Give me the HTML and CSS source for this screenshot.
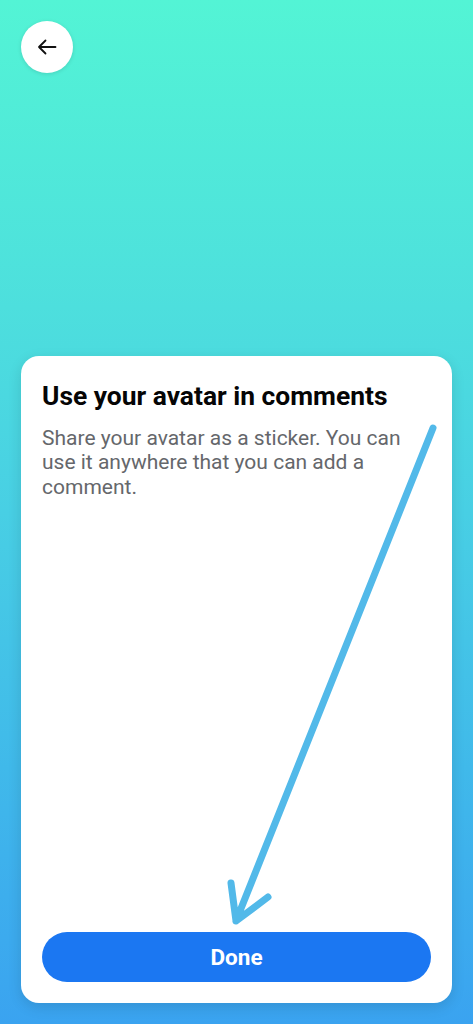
FILE: index.html
```html
<!DOCTYPE html>
<html>
<head>
<meta charset="utf-8">
<link rel="stylesheet" href="styles.css">
</head>
<body>
<div class="screen">
  <div class="back">
    <svg width="24" height="24" viewBox="0 0 24 24"><path d="M20.5 12H4 M10.5 5.5L4 12l6.5 6.5" fill="none" stroke="#111" stroke-width="1.8" stroke-linecap="round" stroke-linejoin="round"/></svg>
  </div>
  <div class="card">
    <h1 class="title">Use your avatar in comments</h1>
    <p class="desc">Share your avatar as a sticker. You can use it anywhere that you can add a comment.</p>
    <button class="done">Done</button>
  </div>
  <svg class="annot" width="473" height="1024" viewBox="0 0 473 1024">
    <path d="M433 428 L236 921 M231 883 L236 921 L268 897" fill="none" stroke="#52b9e9" stroke-width="7" stroke-linecap="round" stroke-linejoin="round"/>
  </svg>
</div>
</body>
</html>
```
FILE: styles.css
```css
html, body {
  margin: 0;
  padding: 0;
}
body {
  font-family: Roboto, "Liberation Sans", Arial, sans-serif;
}
.screen {
  position: relative;
  width: 473px;
  height: 1024px;
  box-sizing: border-box;
  padding: 21px;
  display: flex;
  flex-direction: column;
  background: linear-gradient(180deg, #53f4d5 0%, #4ddfdd 30%, #48cfe4 50%, #40b9ea 75%, #3aa3f0 100%);
  overflow: hidden;
}
.back {
  width: 52px;
  height: 52px;
  border-radius: 50%;
  background: #fff;
  display: flex;
  align-items: center;
  justify-content: center;
  box-shadow: 0 1px 4px rgba(0,0,0,0.12);
}
.card {
  margin-top: auto;
  height: 647px;
  box-sizing: border-box;
  background: #fff;
  border-radius: 18px;
  padding: 24px 21px 21px;
  display: flex;
  flex-direction: column;
  box-shadow: 0 4px 14px rgba(0,0,0,0.12);
}
.title {
  margin: 0;
  font-size: 26.4px;
  line-height: 32px;
  font-weight: 700;
  color: #050505;
}
.desc {
  margin: 13.5px 0 0;
  font-size: 21px;
  line-height: 24.5px;
  color: #65676b;
}
.done {
  margin-top: auto;
  height: 50px;
  width: 100%;
  border: none;
  border-radius: 25px;
  background: #1b77f2;
  color: #fff;
  font-family: Roboto, "Liberation Sans", Arial, sans-serif;
  font-size: 22.5px;
  font-weight: 700;
}
.annot {
  position: absolute;
  left: 0;
  top: 0;
  pointer-events: none;
}
```
